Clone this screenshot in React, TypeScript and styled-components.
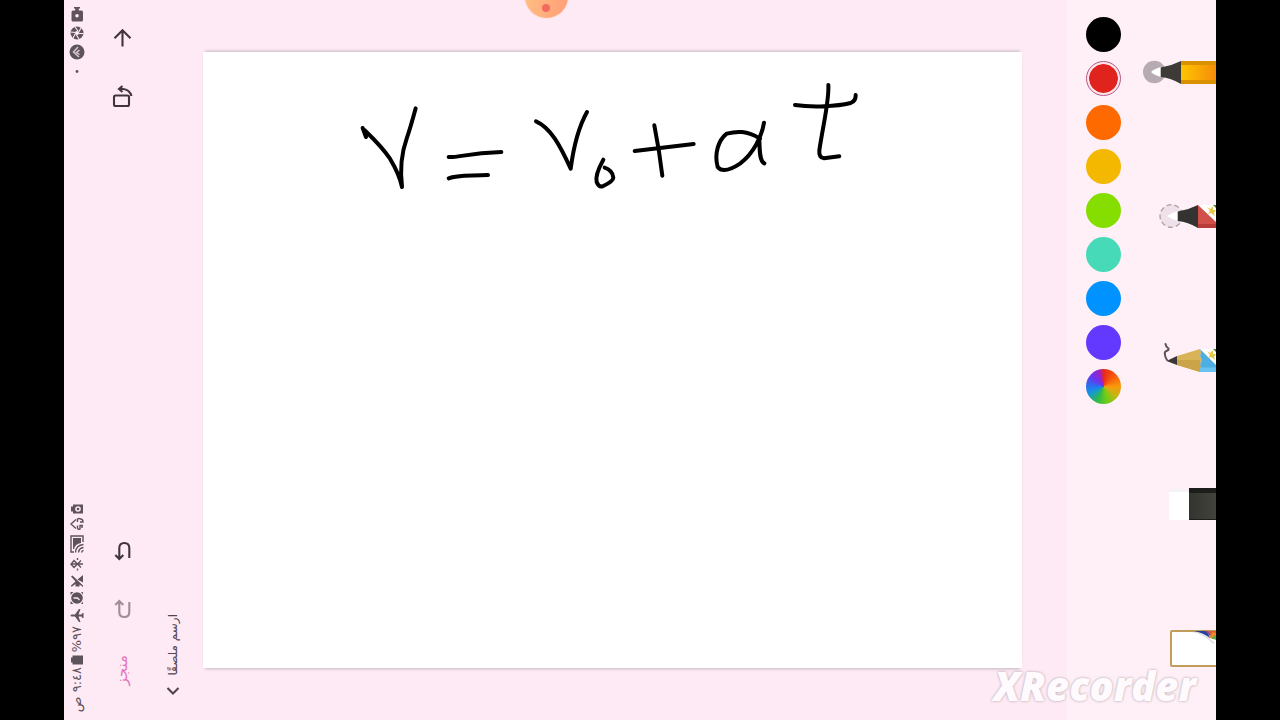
import React from "react";
import styled, { createGlobalStyle, css } from "styled-components";

const GlobalStyle = createGlobalStyle`
  * { box-sizing: border-box; }
  body {
    margin: 0;
    background: #000;
    font-family: "DejaVu Sans", "Noto Sans", sans-serif;
  }
`;

const Letterbox = styled.div`
  display: flex;
  min-height: 100vh;
  padding: 0 5%;
  background: #000;
`;

const Screen = styled.div`
  position: relative;
  flex: 1;
  display: flex;
  overflow: hidden;
  background: #feeaf5;
`;

/* Reads bottom to top, as the device is held sideways. */
const sideways = css`
  writing-mode: vertical-rl;
  transform: rotate(180deg);
  white-space: nowrap;
`;

const StatusStrip = styled.header`
  width: 26px;
  display: flex;
  flex-direction: column;
  justify-content: space-between;
  padding: 6px 0 8px;
  color: #5f535b;
`;

const StatusGroup = styled.div<{ $gap: number }>`
  display: flex;
  flex-direction: column;
  align-items: center;
  gap: ${(p) => p.$gap}px;
`;

const StatusText = styled.span`
  ${sideways}
  direction: rtl;
  font-size: 13px;
  line-height: 16px;
`;

const Glyph = styled.svg<{ $outline?: boolean }>`
  display: block;
  flex: none;
  ${(p) =>
    p.$outline
      ? css`
          fill: none;
          stroke: currentColor;
          stroke-width: 1.4;
        `
      : css`
          fill: currentColor;
        `}
`;

const Toolbar = styled.nav`
  width: 64px;
  display: flex;
  flex-direction: column;
  justify-content: space-between;
  padding: 9px 0 18px;
`;

const ToolbarGroup = styled.div`
  display: flex;
  flex-direction: column;
`;

const plainButton = css`
  border: 0;
  padding: 0;
  background: none;
  font-family: inherit;
  cursor: pointer;
`;

const IconButton = styled.button`
  ${plainButton}
  height: 58px;
  display: flex;
  align-items: center;
  justify-content: center;
  color: #41343c;
  &:disabled { color: #9d8d97; }
`;

const LineIcon = styled.svg`
  display: block;
  fill: none;
  stroke: currentColor;
  stroke-width: 2.1;
`;

const DoneButton = styled.button`
  ${plainButton}
  height: 64px;
  display: flex;
  align-items: center;
  justify-content: center;
  color: #e377bd;
`;

const SidewaysLabel = styled.span<{ $size: number }>`
  ${sideways}
  direction: rtl;
  font-size: ${(p) => p.$size}px;
  line-height: 20px;
`;

const StickerColumn = styled.div`
  width: 38px;
  display: flex;
  flex-direction: column;
  justify-content: flex-end;
  padding-bottom: 24px;
`;

const StickerButton = styled.button`
  ${plainButton}
  display: flex;
  flex-direction: column;
  align-items: center;
  gap: 10px;
  color: #51444c;
`;

const Stage = styled.main`
  flex: 1;
  display: flex;
  padding: 52px 45px 52px 11px;
`;

const Paper = styled.section`
  flex: 1;
  background: #fff;
  box-shadow: 0 -3px 3px -2px #c4b6be, 0 3px 3px -2px #c4b6be;
`;

const Ink = styled.svg`
  display: block;
  width: 100%;
  fill: none;
  stroke: #000;
  stroke-width: 12;
  stroke-linecap: round;
  stroke-linejoin: round;
`;

const SidePanel = styled.aside`
  display: flex;
  background: #fef0f6;
`;

const Palette = styled.div`
  width: 73px;
  display: flex;
  flex-direction: column;
  align-items: center;
  gap: 9px;
  padding-top: 17px;
`;

const Swatch = styled.button<{ $paint: string; $selected?: boolean }>`
  ${plainButton}
  width: 35px;
  height: 35px;
  border-radius: 50%;
  background: ${(p) => p.$paint};
  ${(p) =>
    p.$selected &&
    css`
      border: 1px solid #b8577f;
      padding: 2px;
      background-clip: content-box;
      box-shadow: inset 0 0 0 2px #fce4ee;
    `}
`;

const ToolRack = styled.div`
  width: 76px;
  display: flex;
  flex-direction: column;
`;

const ToolButton = styled.button`
  ${plainButton}
  flex: 1;
  display: flex;
  align-items: center;
  justify-content: flex-end;
`;

const Bubble = styled.button`
  ${plainButton}
  position: absolute;
  top: -25px;
  left: 40%;
  width: 43px;
  height: 43px;
  border-radius: 50%;
  background: linear-gradient(100deg, #ffc183, #ff9d78);
  box-shadow: 0 0 2px #ffc9b4;
  &::after {
    content: "";
    display: block;
    width: 8px;
    height: 8px;
    margin: 22px auto 0;
    border-radius: 50%;
    background: #f26b5e;
  }
`;

const Watermark = styled.div`
  position: absolute;
  right: 20px;
  bottom: 10px;
  font: italic 800 40px/48px "Open Sans", "Noto Sans", sans-serif;
  color: #fffafd;
  text-shadow: 0 0 3px #c0b3ba, 0 0 2px #d2c6cc;
  pointer-events: none;
`;

const colours = [
  { name: "Black", paint: "#000" },
  { name: "Red", paint: "#e0231c" },
  { name: "Orange", paint: "#ff6a00" },
  { name: "Yellow", paint: "#f4b800" },
  { name: "Green", paint: "#86de00" },
  { name: "Turquoise", paint: "#47dab8" },
  { name: "Blue", paint: "#0093ff" },
  { name: "Violet", paint: "#6338ff" },
  {
    name: "Custom colour",
    paint:
      "conic-gradient(#e8281a, #f75a0c 45deg, #f99a0c 90deg, #c9b312 125deg, #6fce16 165deg, #2fb84e 205deg, #1494e0 245deg, #2d6cf0 275deg, #6a35ee 310deg, #9a22c8 345deg, #e8281a)",
  },
];

const MarkerPen = () => (
  <svg width="76" height="48" viewBox="0 0 76 48">
    <defs>
      <linearGradient id="amber">
        <stop offset="0" stopColor="#fdc500" />
        <stop offset="1" stopColor="#f68c0a" />
      </linearGradient>
    </defs>
    <circle cx="14.3" cy="24" r="11.3" fill="#b5abb1" />
    <path d="M11 24Q14 21 21 19V29Q14 27 11 24Z" fill="#fff" />
    <path d="M20.7 19.5Q31 18 41 13V36Q31 30 20.7 29Z" fill="#3c3b38" />
    <path d="M41 13H76V36H41Z" fill="#d99100" />
    <path d="M41 17H76V32H41Z" fill="url(#amber)" />
  </svg>
);

const FeltPen = () => (
  <svg width="76" height="48" viewBox="0 0 76 48">
    <circle cx="31.3" cy="24" r="11.3" fill="#efe1e9" stroke="#ab9fa6" strokeWidth="1.3" strokeDasharray="5 3" />
    <path d="M27 24Q31 21 38 19V29Q31 27 27 24Z" fill="#fff" />
    <path d="M37.7 19.5Q48 18 58 13V36Q48 30 37.7 29Z" fill="#343331" />
    <path d="M58 13H76V36H58Z" fill="#d2504a" />
    <path d="M58 32H76V36H58Z" fill="#b83b38" />
    <path d="M58 13H76V30Z" fill="#fff" />
    <path d="M67 15L70 17L73 14L73 18L76 18L74 21L75 24L71 21L68 22L70 19Z" fill="#e8c647" />
    <path d="M73 13H76V16Z" fill="#4a7a3a" />
  </svg>
);

const Pencil = () => (
  <svg width="76" height="48" viewBox="0 0 76 48">
    <path d="M25.500 8Q26 11 28.500 12.500Q29 14 26.500 15Q24.500 15.500 24.800 18Q25 21 27 24" fill="none" stroke="#5d5258" strokeWidth="2" strokeLinecap="round" />
    <path d="M26.500 25L37 20V29Z" fill="#3a3836" />
    <path d="M37 20L60 13Q62 17 60 20Q63 24 60 28Q62 32 60 36L37 29Z" fill="#d9b357" />
    <path d="M37 24H60L60 28Q62 32 60 36L37 29Z" fill="#cba349" />
    <path d="M60 13H76V36H60Q62 32 60 28Q63 24 60 20Q62 17 60 13Z" fill="#4daee2" />
    <path d="M60 31.500H76V36H60Z" fill="#68c3f2" />
    <path d="M60 13H76V29Z" fill="#fff" />
    <path d="M67 15L70 17L73 14L73 18L76 18L74 21L75 24L71 21L68 22L70 19Z" fill="#e8c647" />
    <path d="M73 13H76V16Z" fill="#4a7a3a" />
  </svg>
);

const Eraser = () => (
  <svg width="76" height="48" viewBox="0 0 76 48">
    <defs>
      <linearGradient id="sleeve">
        <stop offset="0" stopColor="#33332f" />
        <stop offset="1" stopColor="#43433d" />
      </linearGradient>
    </defs>
    <path d="M49 9H31Q29 9 29 11V38Q29 40 31 40H49Z" fill="#fff" />
    <path d="M29 12V11Q29 9 31 9H49V12Z" fill="#f4f2f4" />
    <path d="M49 8H76V40H49Z" fill="url(#sleeve)" />
    <path d="M49 8H76V13H49Z" fill="#1d1d1c" />
    <path d="M49 39H76V40H49Z" fill="#1d1d1c" />
  </svg>
);

const PaperSheet = () => (
  <svg width="76" height="48" viewBox="0 0 76 48">
    <rect x="31" y="7" width="50" height="35" rx="1" fill="#fff" stroke="#c19d5c" strokeWidth="2" />
    <path d="M52 8Q64 10 73 20L76 18V8Z" fill="#c9ced6" opacity=".6" />
    <path d="M54 7H67L70 14Q64 9 54 7Z" fill="#23409a" />
    <path d="M65 7H76V9L71 13Z" fill="#8a4694" />
    <path d="M68 7H76V10L71 11Z" fill="#e05a35" />
    <path d="M69 13L73 8L76 9V14L73 16Z" fill="#ee8a24" />
    <path d="M71 14L76 11V16Z" fill="#56ab4a" />
    <path d="M69 14L76 16V20Z" fill="#fff" />
  </svg>
);

const tools = [
  { name: "Marker", Art: MarkerPen },
  { name: "Felt pen", Art: FeltPen },
  { name: "Pencil", Art: Pencil },
  { name: "Eraser", Art: Eraser },
  { name: "Paper", Art: PaperSheet },
];

const CUT = "#feeaf5";

function StatusBar() {
  return (
    <StatusStrip>
      <StatusGroup $gap={3}>
        <Glyph width="16" height="16" viewBox="0 0 16 16">
          <path d="M5 1H11V2.500H9.800V4.500H12.500Q14 4.500 14 6V14Q14 15.500 12.500 15.500H4Q2.500 15.500 2.500 14V6Q2.500 4.500 4 4.500H6.200V2.500H5Z" />
          <circle cx="8" cy="9.700" r="1.800" fill={CUT} />
        </Glyph>
        <Glyph width="16" height="16" viewBox="0 0 16 16">
          <circle cx="8" cy="8" r="6.500" />
          <path d="M6 2L9 6M12 3L9.500 7.500M14.500 8.500L9.500 8.500M10 14L7.500 10M4 13L6.500 8.500M1.500 7L6.500 7.500" stroke={CUT} strokeWidth="1.100" />
          <circle cx="8" cy="8" r="2" fill={CUT} />
        </Glyph>
        <Glyph width="16" height="16" viewBox="0 0 16 16">
          <circle cx="8" cy="8" r="7.500" />
          <path d="M9 3L4.500 8L10 13M10.500 6L7.500 8.500L10.500 10.500" fill="none" stroke="#d8c8d1" strokeWidth="1.500" />
        </Glyph>
        <Glyph width="16" height="16" viewBox="0 0 16 16">
          <circle cx="8" cy="8.500" r="1.400" />
        </Glyph>
      </StatusGroup>

      <StatusGroup $gap={2}>
        <Glyph width="16" height="12" viewBox="0 0 16 12">
          <path d="M2 3.500H4V1.500H14V10.500H4V8.500H2Z" />
          <circle cx="9" cy="6" r="2.800" fill={CUT} />
          <circle cx="9" cy="6" r="1.300" />
        </Glyph>
        <Glyph $outline width="16" height="14" viewBox="0 0 16 14">
          <path d="M7 2.500L2 7L7 11.500M8.500 5V2Q10 1 11.500 2Q14 2 14 5H11M14 8.500H11V12Q9 13 8.500 11V8.500M13 8.500V11" />
        </Glyph>
        <Glyph $outline width="16" height="22" viewBox="0 0 16 22">
          <path d="M14 9V3H2V19H5" />
          <path d="M4 5H12V10Q6 11 5 16H4Z" fill="currentColor" stroke="none" />
          <path d="M14.500 11.500Q7 12 6.500 19.500M14.500 14.500Q10 15 9.500 19.500M14.500 17.500Q13 17.500 12.500 19.500" />
        </Glyph>
        <Glyph $outline width="16" height="14" viewBox="0 0 16 14">
          <path d="M12 3.500L5 10.500L2 7.200L5 3.500L12 10.500M2 7H14" />
          <path d="M8.500 1V3M8.500 11.500V13.500" />
        </Glyph>
        <Glyph width="16" height="16" viewBox="0 0 16 16">
          <path d="M2 3.500L3.500 2.500L14 12.500V14L10.500 11.500V13.500H6.500V11L3 13.500H2V12.500L6.500 8.500Z" />
          <path d="M14 2V9.500L8.500 6.500Z" />
        </Glyph>
        <Glyph width="16" height="14" viewBox="0 0 16 14">
          <circle cx="8" cy="7" r="5.800" />
          <path d="M1.500 4V1H4.500ZM1.500 10V13H4.500ZM12 1L14 3.500V1ZM12 13L14 10.500V13Z" />
          <path d="M4.500 7H8.500L10.500 9" fill="none" stroke={CUT} strokeWidth="1.300" />
        </Glyph>
        <Glyph width="16" height="17" viewBox="0 0 16 17">
          <path d="M1.500 8.500Q1.500 7.500 3 7.500H6L10 2H11.500L9.500 7.500H12.500L13.500 6H14.500V11H13.500L12.500 9.500H9.500L11.500 15H10L6 9.500H3Q1.500 9.500 1.500 8.500Z" />
        </Glyph>
        <StatusText>٩٧%</StatusText>
        <Glyph width="16" height="10" viewBox="0 0 16 10">
          <path d="M2 2.500H3.500V.500H14V9.500H3.500V7.500H2Z" />
        </Glyph>
        <StatusText>٩:٤٨ ص</StatusText>
      </StatusGroup>
    </StatusStrip>
  );
}

export default function App() {
  return (
    <>
      <GlobalStyle />
      <Letterbox>
        <Screen>
          <StatusBar />

          <Toolbar>
            <ToolbarGroup>
              <IconButton aria-label="Back">
                <LineIcon width="24" height="24" viewBox="0 0 24 24">
                  <path d="M12.500 20.500V4.500M4.500 12.300L12.500 4.300L20.500 12.300" />
                </LineIcon>
              </IconButton>
              <IconButton aria-label="Rotate">
                <LineIcon width="24" height="24" viewBox="0 0 24 24">
                  <rect x="4" y="11.500" width="15" height="10.500" rx="1.500" />
                  <path d="M9 5H13Q19.500 5.500 21.500 12M12.500 2L9 5L12.500 8" />
                </LineIcon>
              </IconButton>
            </ToolbarGroup>
            <ToolbarGroup>
              <IconButton aria-label="Undo">
                <LineIcon width="24" height="24" viewBox="0 0 24 24">
                  <path d="M9.300 19.500V9Q9.300 4 14.300 4T19.300 9V19M5.300 16L9.300 20L13.300 16" />
                </LineIcon>
              </IconButton>
              <IconButton aria-label="Redo" disabled>
                <LineIcon width="24" height="24" viewBox="0 0 24 24">
                  <path d="M9.300 4.500V15Q9.300 20 14.300 20T19.300 15V5M5.300 8L9.300 4L13.300 8" />
                </LineIcon>
              </IconButton>
              <DoneButton>
                <SidewaysLabel $size={15}>منجز</SidewaysLabel>
              </DoneButton>
            </ToolbarGroup>
          </Toolbar>

          <StickerColumn>
            <StickerButton>
              <SidewaysLabel $size={12}>ارسم ملصقًا</SidewaysLabel>
              <LineIcon width="14" height="10" viewBox="0 0 14 10">
                <path d="M1.500 2L7 7.500L12.500 2" />
              </LineIcon>
            </StickerButton>
          </StickerColumn>

          <Stage>
            <Paper aria-label="Drawing">
              <Ink viewBox="-441 -55 2457 1848">
                <path d="M38 173L48 200L42 178C60 196 90 222 120 265C135 290 150 320 156 350C150 300 152 255 170 205C182 170 190 140 197 114" />
                <path d="M296 260C320 263 350 249 454 245M296 324C320 314 350 317 414 314" />
                <path d="M558 153C602 172 630 225 662 295C668 250 680 180 711 125" />
                <path d="M760 268C745 295 736 320 740 335Q746 351 758 348Q790 332 790 322Q788 300 764 292" />
                <path d="M913 165C920 200 928 240 937 316M854 242L1031 221" />
                <path d="M1230 205C1190 180 1160 182 1130 190C1105 210 1092 250 1103 290C1115 305 1140 300 1170 280C1210 250 1235 200 1242 157M1228 205C1229 240 1228 272 1243 279" />
                <path d="M1435 44C1438 90 1420 160 1408 240Q1406 262 1422 264L1468 258M1335 104C1390 112 1460 108 1502 98Q1518 92 1517 74" />
              </Ink>
            </Paper>
          </Stage>

          <SidePanel>
            <Palette>
              {colours.map((c) => (
                <Swatch key={c.name} aria-label={c.name} $paint={c.paint} $selected={c.name === "Red"} />
              ))}
            </Palette>
            <ToolRack>
              {tools.map(({ name, Art }) => (
                <ToolButton key={name} aria-label={name}>
                  <Art />
                </ToolButton>
              ))}
            </ToolRack>
          </SidePanel>

          <Bubble aria-label="Recorder controls" />
          <Watermark>XRecorder</Watermark>
        </Screen>
      </Letterbox>
    </>
  );
}
